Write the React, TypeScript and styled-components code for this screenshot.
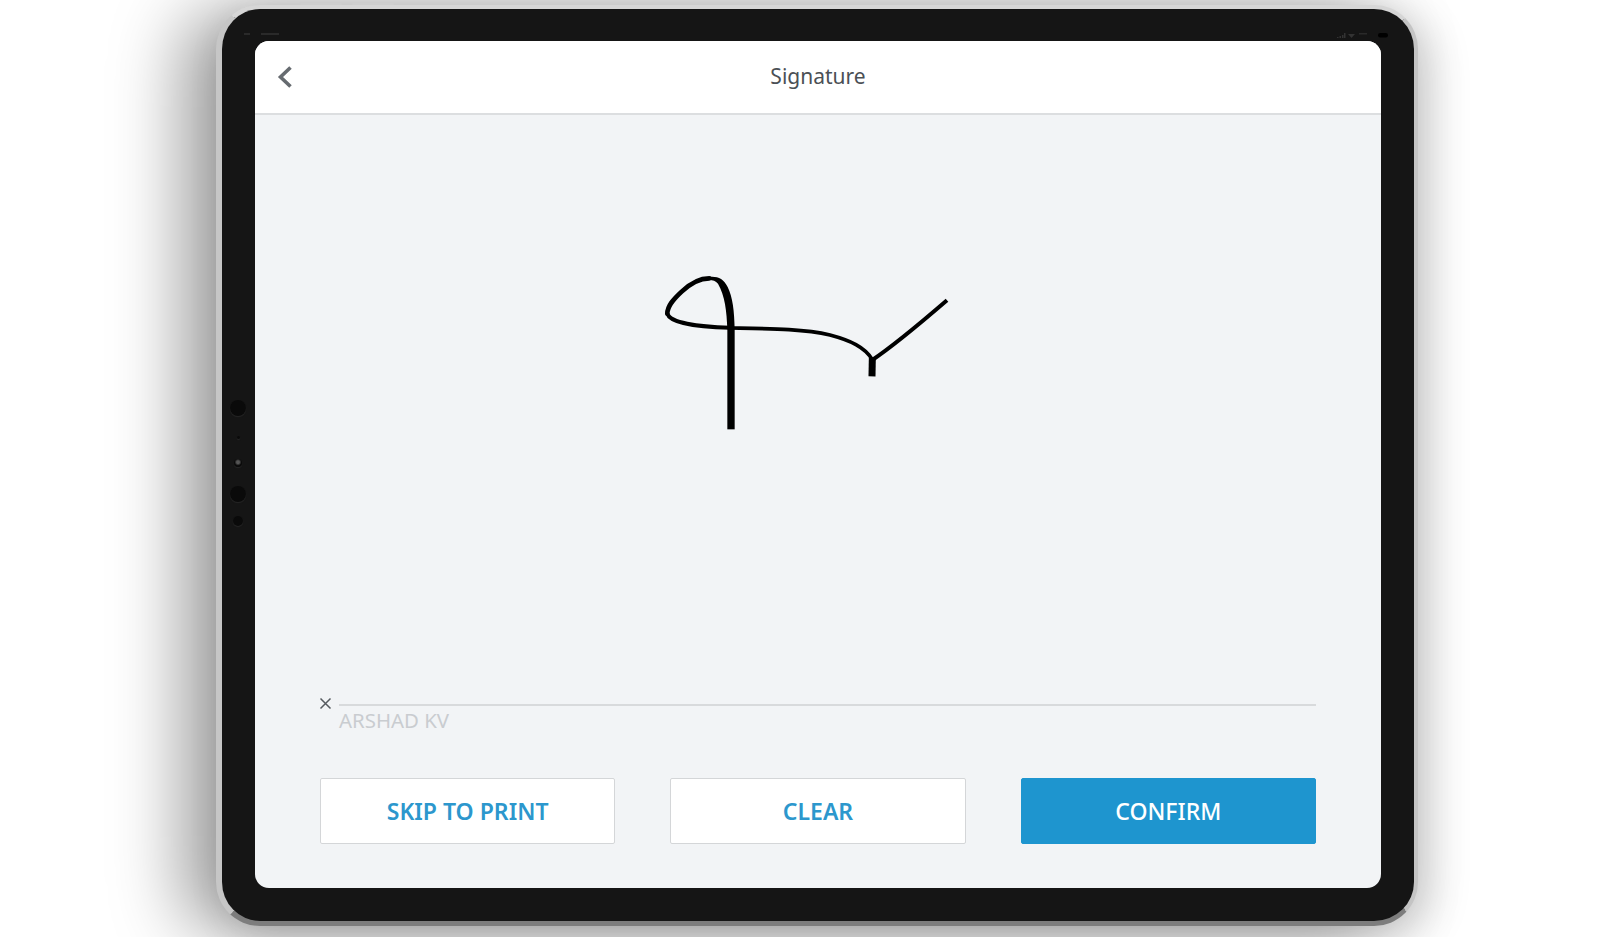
import styled, {createGlobalStyle} from 'styled-components';

const GlobalStyle = createGlobalStyle`
  html, body {
    margin: 0;
    height: 100%;
    background: #fff;
    overflow: hidden;
  }
  body {
    font-family: "Noto Sans", "Open Sans", sans-serif;
  }
`;

const Page = styled.div`
  height: 937px;
  padding: 5px 0 0 216px;
  box-sizing: border-box;
`;

const Tablet = styled.div`
  position: relative;
  box-sizing: border-box;
  width: 1202px;
  height: 921px;
  padding: 32px 33px 33px;
  background: #151515;
  border-radius: 44px;
  border-style: solid;
  border-width: 4px 4px 5px 6px;
  border-color: #d6d6d6 #c4c4c4 #7d7d7d #c6c6c6;
  box-shadow: -34px 6px 70px rgba(0, 0, 0, 0.38), 14px 10px 40px rgba(0, 0, 0, 0.16);
`;

const TopKey = styled.span<{$left: number}>`
  position: absolute;
  top: -6px;
  left: ${p => p.$left}px;
  width: 42px;
  height: 2px;
  background: #cfcfcf;
  border-radius: 2px 2px 0 0;
`;

const SideSensors = styled.div`
  position: absolute;
  left: 6px;
  top: 0;
  width: 20px;
`;

const Sensor = styled.span<{$top: number; $size: number; $glint?: boolean}>`
  position: absolute;
  left: ${p => 10 - p.$size / 2}px;
  top: ${p => p.$top - p.$size / 2}px;
  width: ${p => p.$size}px;
  height: ${p => p.$size}px;
  border-radius: 50%;
  background: ${p => (p.$glint ? 'radial-gradient(circle at 50% 40%, #555 0 22%, #0a0a0a 55%)' : '#0a0a0a')};
  box-shadow: 0 1px 1px #262626;
`;

const StatusIcons = styled.svg`
  position: absolute;
  right: 26px;
  top: 24px;
`;

const CameraMarks = styled.svg`
  position: absolute;
  left: 22px;
  top: 23px;
`;

const Screen = styled.div`
  height: 100%;
  display: flex;
  flex-direction: column;
  background: #f2f4f6;
  border-radius: 14px;
  overflow: hidden;
`;

const Header = styled.header`
  position: relative;
  flex: none;
  height: 74px;
  display: flex;
  align-items: center;
  justify-content: center;
  box-sizing: border-box;
  padding-bottom: 2px;
  background: #fff;
  border-bottom: 2px solid #dcdee0;
`;

const BackButton = styled.button`
  position: absolute;
  left: 22px;
  top: 24px;
  padding: 0;
  display: flex;
  background: none;
  border: none;
`;

const Title = styled.h1`
  margin: 0;
  font-size: 21px;
  font-weight: 400;
  color: #4b5055;
`;

const Body = styled.main`
  flex: 1;
  min-height: 0;
  display: flex;
  flex-direction: column;
  padding: 0 65px 44px;
`;

const SignatureArea = styled.div`
  flex: 1;
  min-height: 0;
  padding: 146px 0 0 310px;
`;

const SignLine = styled.div`
  display: flex;
  align-items: center;
  gap: 7px;
  height: 13px;
  margin-left: -1px;
`;

const Cross = styled.svg`
  flex: none;
`;

const LineBody = styled.div`
  flex: 1;
  height: 2px;
  margin-top: 3px;
  background: #d8dadc;
`;

const SignerName = styled.div`
  margin: -3px 0 44px 19px;
  height: 27px;
  font-size: 20.4px;
  line-height: 27px;
  color: #c9ccd0;
`;

const Actions = styled.div`
  display: flex;
  gap: 55px;
`;

const ActionButton = styled.button<{$primary?: boolean}>`
  flex: 1;
  height: 66px;
  padding: 0;
  font-family: inherit;
  font-size: 23px;
  font-weight: ${p => (p.$primary ? 500 : 600)};
  border-radius: 2px;
  border: 1.5px solid ${p => (p.$primary ? '#1e95cf' : '#d4d6d8')};
  background: ${p => (p.$primary ? '#1e95cf' : '#fff')};
  color: ${p => (p.$primary ? '#fff' : '#2c97cd')};
`;

const BackIcon = () => (
    <svg width="16" height="24" viewBox="0 0 16 24" fill="none">
        <path d="M13.5 2.5 L3.5 12 L13.5 21.5" stroke="#666b70" strokeWidth="3.6"/>
    </svg>
);

const SignatureDrawing = () => (
    <svg width="330" height="170" viewBox="0 0 990 510" fill="none" stroke="#000" strokeLinecap="round">
        <path d="M236 48 C262 45 280 52 293 78 C308 108 313 150 314 205 L292 205 C290 150 285 105 264 68 C256 58 245 56 232 57 Z" fill="#000" stroke="none"/>
        <path d="M238 52 C205 52 180 68 155 92 C130 115 112 135 112 158" strokeWidth="14"/>
        <path d="M112 158 C120 185 200 198 300 200" strokeWidth="12"/>
        <path d="M300 201 C420 203 520 203 600 222 C660 238 705 258 727 296" strokeWidth="11"/>
        <path d="M303 200 L303 505" strokeWidth="22" strokeLinecap="butt"/>
        <path d="M727 290 L726 346" strokeWidth="21" strokeLinecap="butt"/>
        <path d="M727 297 C790 255 850 205 951 118" strokeWidth="12" strokeLinecap="butt"/>
    </svg>
);

export default function App() {
    return (
        <Page>
            <GlobalStyle/>
            <Tablet>
                <TopKey $left={78}/>
                <TopKey $left={130}/>
                <CameraMarks width="36" height="4" viewBox="0 0 36 4">
                    <rect x="0" y="1" width="6" height="2" fill="#2a2a2a"/>
                    <rect x="17" y="1" width="18" height="2" fill="#2a2a2a"/>
                </CameraMarks>
                <SideSensors>
                    <Sensor $top={399} $size={16}/>
                    <Sensor $top={428} $size={3}/>
                    <Sensor $top={454} $size={8} $glint/>
                    <Sensor $top={485} $size={16}/>
                    <Sensor $top={512} $size={10}/>
                </SideSensors>
                <StatusIcons width="52" height="5" viewBox="0 0 52 5">
                    <path d="M1 5h1.5V4H1zM3.5 5H5V3H3.5zM6 5h1.5V2H6zM8 5h1.5V0H8z" fill="#333"/>
                    <path d="M12 1 L19 1 L15.5 5z" fill="#333"/>
                    <rect x="23" y="0" width="8" height="1.5" fill="#2a2a2a"/>
                    <rect x="42" y="0" width="10" height="4.5" rx="2.2" fill="#000"/>
                </StatusIcons>
                <Screen>
                    <Header>
                        <BackButton aria-label="Back"><BackIcon/></BackButton>
                        <Title>Signature</Title>
                    </Header>
                    <Body>
                        <SignatureArea><SignatureDrawing/></SignatureArea>
                        <SignLine>
                            <Cross width="13" height="13" viewBox="0 0 13 13">
                                <path d="M1.5 1.5 L11.5 11.5 M11.5 1.5 L1.5 11.5" stroke="#555a5f" strokeWidth="1.5"/>
                            </Cross>
                            <LineBody/>
                        </SignLine>
                        <SignerName>ARSHAD KV</SignerName>
                        <Actions>
                            <ActionButton>SKIP TO PRINT</ActionButton>
                            <ActionButton>CLEAR</ActionButton>
                            <ActionButton $primary>CONFIRM</ActionButton>
                        </Actions>
                    </Body>
                </Screen>
            </Tablet>
        </Page>
    );
}
